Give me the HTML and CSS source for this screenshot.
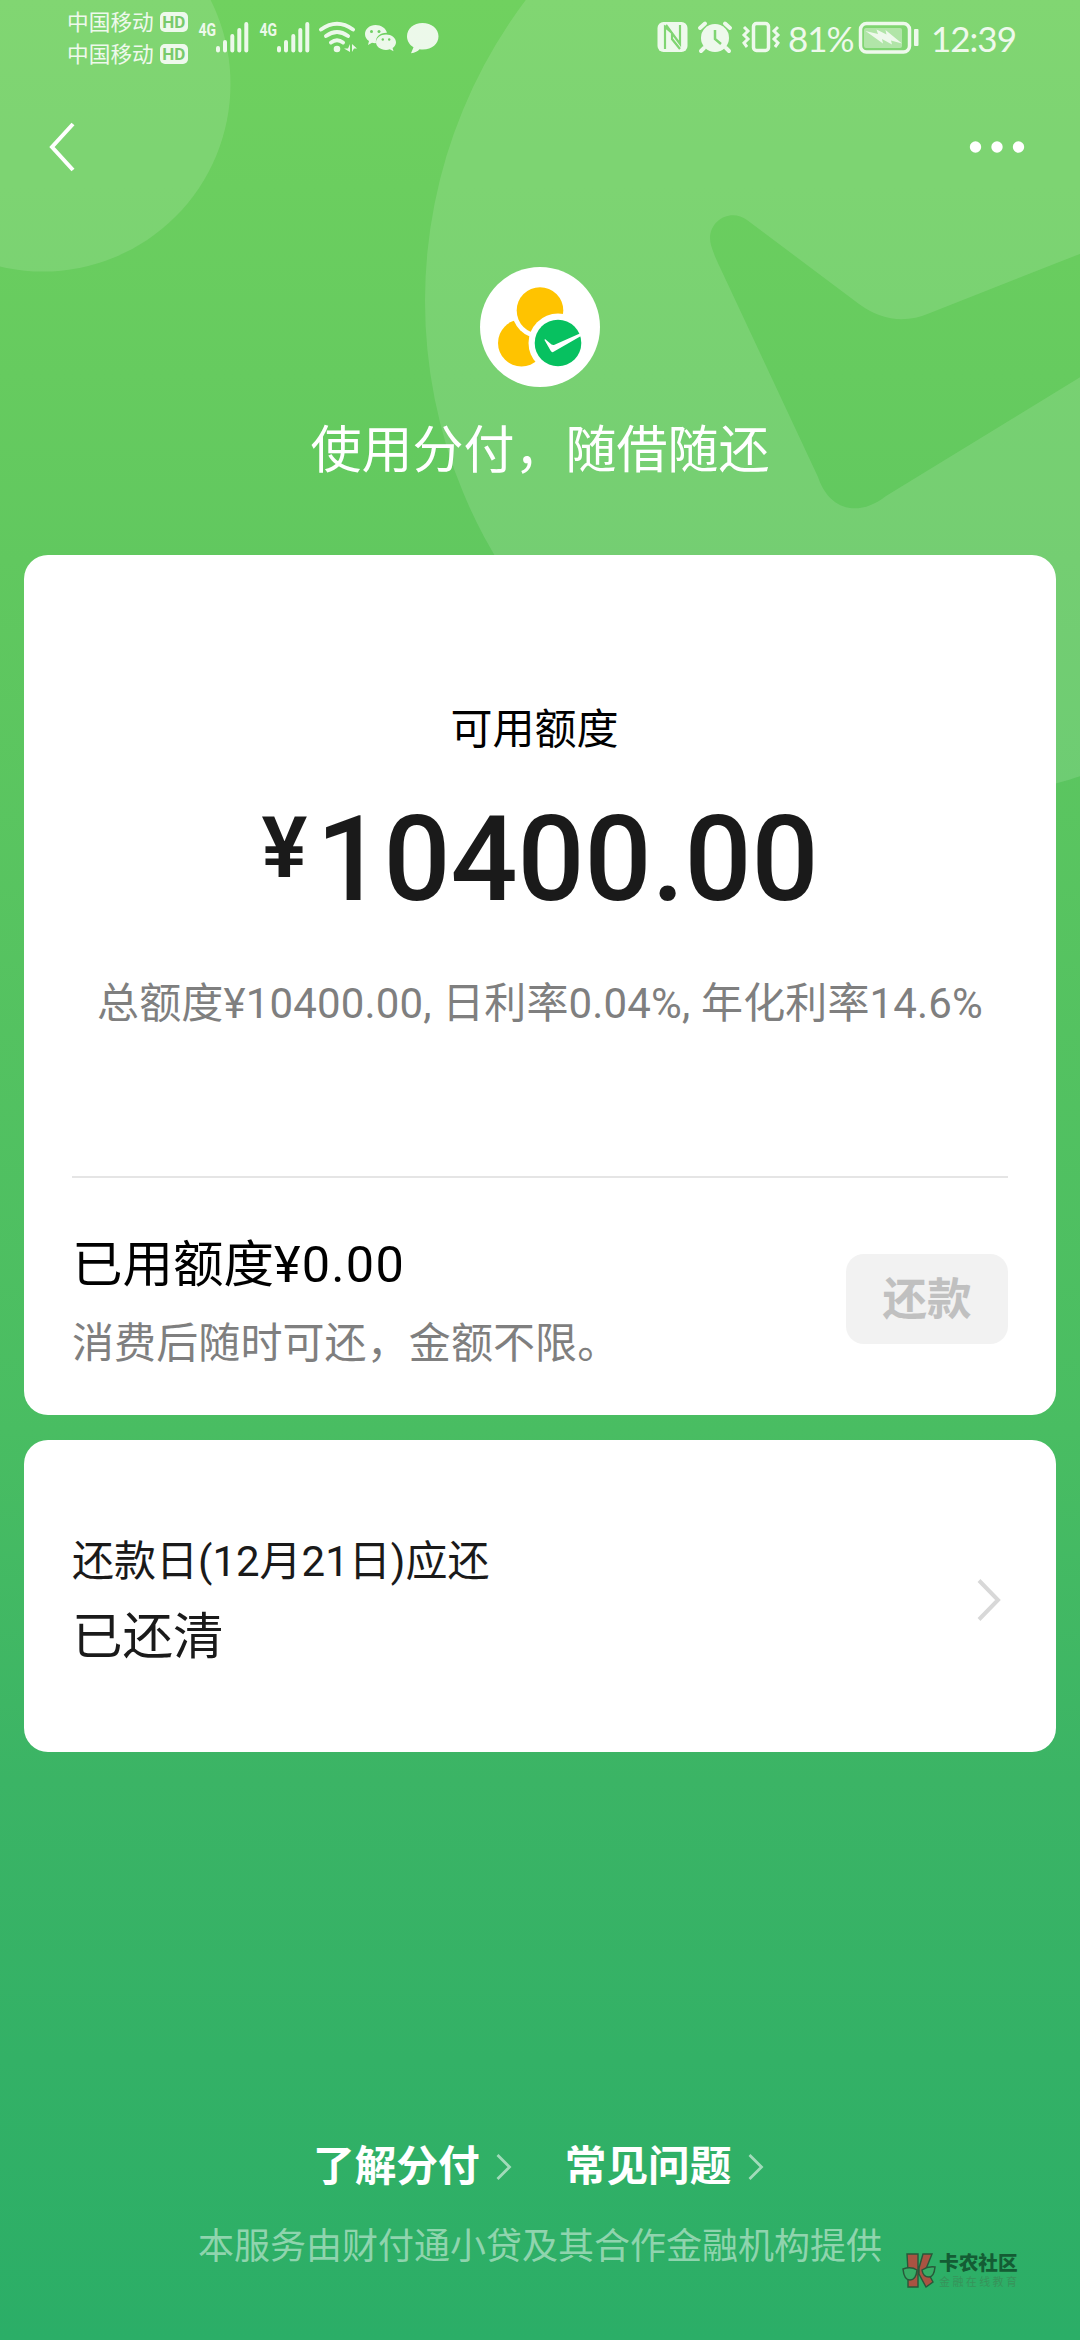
FILE: index.html
```html
<!DOCTYPE html>
<html lang="zh-CN">
<head>
<meta charset="utf-8">
<title>分付</title>
<link rel="stylesheet" href="styles.css">
</head>
<body>
<div class="page">
  <svg class="backdrop" viewBox="0 0 1080 900" width="1080" height="900">
    <circle cx="43" cy="84" r="187.5" fill="#fff" fill-opacity=".12"/>
    <path fill="#fff" fill-opacity=".12" fill-rule="evenodd" d="M425 301a500 500 0 1 0 1000 0a500 500 0 1 0 -1000 0ZM1100 246L930 313Q893 329 859 304L747 220C730 207 705 222 711 245Q713 252 717 261L818 477C829 510 858 518 886 496L1100 365Z"/>
  </svg>

  <header class="status">
    <div class="carriers">
      <div class="carrier">中国移动<span class="hd">HD</span></div>
      <div class="carrier">中国移动<span class="hd">HD</span></div>
    </div>
    <svg class="status-left" viewBox="195 0 250 80" width="250" height="80" fill="#fff">
      <g id="signal">
        <text class="net" x="198.500" y="36" textLength="17.500" lengthAdjust="spacingAndGlyphs">4G</text>
        <path d="M218 48v2.500M225 42v8.500M232.300 36v14.500M239.300 30v20.500M246.300 24v26.500" stroke="#fff" stroke-width="4" stroke-linecap="round"/>
      </g>
      <use href="#signal" x="61"/>
      <g fill="none" stroke="#fff" stroke-width="4" stroke-linecap="round">
        <path d="M321 29.500Q337 18 353 29.500M326 36Q337 28 348 36M331 42.500Q337 38 343 42.500"/>
      </g>
      <circle cx="337" cy="49" r="3.300"/>
      <path d="M350 44v8l-6-3.500h4zM352 52v-8l5 4.500h-3z"/>
      <path d="M375.500 25c-6 0-10.500 4-10.500 9 0 3 1.500 5.500 4 7l-1 4 4-2.300q2 .6 4 .4c-1-6 4-10.500 11-10.300-1-4.600-6-7.800-11.500-7.800z"/>
      <path d="M386 34.500c-5.600 0-10 3.500-10 7.700s4.400 7.700 10 7.700q2 0 3.800-.6l3.700 2-.9-3.300c2-1.400 3.400-3.500 3.400-5.800 0-4.200-4.400-7.700-10-7.700z"/>
      <g fill="#72cf64"><circle cx="371.500" cy="31.500" r="1.500"/><circle cx="379" cy="31.500" r="1.500"/><circle cx="382.800" cy="39.500" r="1.200"/><circle cx="389.200" cy="39.500" r="1.200"/></g>
      <path d="M422.500 23c-9 0-15.500 5.800-15.500 13.300 0 4.700 2.500 8.500 6.500 11l-2.500 6q6-1 8.500-4c11 1.500 19-4.500 19-13 0-7.500-7-13.300-16-13.300z"/>
    </svg>
    <div class="status-right">
      <svg viewBox="655 0 130 80" width="130" height="80" fill="#fff">
        <rect x="657.500" y="22" width="30" height="30" rx="6"/>
        <path d="M665 49V27l7 6v6l8 10M666 25l14 19V25" fill="none" stroke="#80d572" stroke-width="2.200"/>
        <circle cx="715" cy="38" r="14"/>
        <path d="M700 28l5-4.500M730 28l-5-4.500M704 48l-3 3M726 48l3 3" stroke="#fff" stroke-width="4" stroke-linecap="round"/>
        <path d="M715 30v9l6 5" fill="none" stroke="#80d572" stroke-width="2.500"/>
        <rect x="753.500" y="23.500" width="15" height="27" rx="3" fill="none" stroke="#fff" stroke-width="3.500"/>
        <path d="M744 27l4 4-4 4 4 4-4 4 3 4M778 27l-4 4 4 4-4 4 4 4-3 4" fill="none" stroke="#fff" stroke-width="3"/>
      </svg>
      <span class="battery-text">81%</span>
      <svg class="battery" viewBox="858 0 62 80" width="62" height="80" fill="#fff">
        <rect x="860.500" y="23.500" width="49" height="28.500" rx="6" fill="none" stroke="#fff" stroke-width="3.500"/>
        <rect x="864" y="28" width="38" height="20" rx="2" fill-opacity=".45"/>
        <rect x="914" y="29" width="4.500" height="17" rx="1"/>
        <path d="M865.500 31l12.500 3-1.500-4.500 10 5-1-4.500 16.500 13.500-11-3 1 4-10-5.500 1 4.500z"/>
      </svg>
      <span class="clock">12:39</span>
    </div>
  </header>

  <nav class="nav">
    <svg viewBox="0 0 30 54" width="30" height="54"><path d="M27 4L6 27l21 23" fill="none" stroke="#fff" stroke-width="4"/></svg>
    <svg viewBox="0 0 56 14" width="56" height="14" fill="#fff"><circle cx="6.500" cy="7" r="5.700"/><circle cx="28" cy="7" r="5.700"/><circle cx="49.500" cy="7" r="5.700"/></svg>
  </nav>

  <section class="hero">
    <svg viewBox="0 0 120 120" width="120" height="120">
      <circle cx="60" cy="60" r="60" fill="#fff"/>
      <circle cx="41.500" cy="76" r="23.500" fill="#ffc300"/>
      <circle cx="60" cy="43.500" r="28" fill="#fff"/>
      <circle cx="60" cy="43.500" r="23.300" fill="#ffc300"/>
      <circle cx="78" cy="76" r="29.500" fill="#fff"/>
      <circle cx="78" cy="76" r="23.300" fill="#07c160"/>
      <path d="M65 72l6.500 5.500q1.500.8 3 .2L101 66v3L74 84.500q-2 1.500-3.200-.5L64.500 73z" fill="#fff"/>
    </svg>
    <h1>使用分付，随借随还</h1>
  </section>

  <main>
    <section class="card quota">
      <div class="label">可用额度</div>
      <div class="amount"><span class="yen">¥</span><span>10400.00</span></div>
      <div class="terms">总额度¥10400.00, 日利率0.04%, 年化利率14.6%</div>
      <div class="used">
        <div>
          <div class="strong">已用额度<span class="figure">¥0.00</span></div>
          <div class="hint">消费后随时可还，金额不限。</div>
        </div>
        <button class="repay">还款</button>
      </div>
    </section>
    <section class="card due">
      <div>
        <div class="due-date">还款日(12月21日)应还</div>
        <div class="strong">已还清</div>
      </div>
      <svg viewBox="0 0 26 44" width="26" height="44"><path d="M3 2.500L22 22 3 41.500" fill="none" stroke="#d8d8d8" stroke-width="4"/></svg>
    </section>
  </main>

  <footer>
    <div class="links">
      <a>了解分付<svg viewBox="0 0 16 28" width="16" height="28"><path d="M1.500 2L13.500 14 1.500 26" fill="none" stroke="#fff" stroke-opacity=".55" stroke-width="2.800"/></svg></a>
      <a>常见问题<svg viewBox="0 0 16 28" width="16" height="28"><path d="M1.500 2L13.500 14 1.500 26" fill="none" stroke="#fff" stroke-opacity=".55" stroke-width="2.800"/></svg></a>
    </div>
    <p>本服务由财付通小贷及其合作金融机构提供</p>
  </footer>

  <div class="stamp">
    <svg viewBox="0 0 36 36" width="36" height="36">
      <g fill="#a95342" stroke="#28583a" stroke-width="1.400">
        <path d="M6 1h11v33H7V18zM18 15l4-14h9l-6 15 7 13-7 5-7-13z"/>
      </g>
      <path d="M2 16q8-3 14 1-1 10-7 10-6 0-7-11zM21 17q6-4 13-3-1 10-6 10-6 0-7-7z" fill="#37ad66" stroke="#28583a" stroke-width="1.500"/>
    </svg>
    <div>
      <div class="stamp-name">卡农社区</div>
      <div class="stamp-sub">金融在线教育</div>
    </div>
  </div>
</div>
</body>
</html>
```
FILE: styles.css
```css
* { box-sizing: border-box; }
body {
  margin: 0;
  font-family: "Roboto", "Noto Sans CJK SC", sans-serif;
}
svg { display: block; flex: none; }
.page {
  position: relative;
  width: 1080px;
  height: 2340px;
  overflow: hidden;
  display: flex;
  flex-direction: column;
  background: linear-gradient(#70d15f 0, #61c85f 560px, #49bd62 1430px, #3bb465 1780px, #2bae67 2340px);
}
.backdrop { position: absolute; left: 0; top: 0; }
.status, .nav, .hero, main, footer { position: relative; }

.status {
  height: 80px;
  padding-left: 67px;
  display: flex;
  color: #fff;
  opacity: .87;
}
.carriers { width: 128px; padding-top: 6px; }
.carrier {
  display: flex;
  align-items: center;
  gap: 6px;
  height: 32px;
  line-height: 33px;
  font-size: 21.700px;
  white-space: nowrap;
}
.hd {
  width: 28px;
  height: 20px;
  border-radius: 5px;
  background: #fff;
  color: #77c96a;
  font: bold 17px/20px "Roboto", sans-serif;
  text-align: center;
}
.net { font: bold 19px "Roboto", sans-serif; }
.status-right {
  margin-left: 210px;
  display: flex;
  font: 35px/76px "Lato", sans-serif;
}
.battery-text { width: 73px; padding-left: 3px; letter-spacing: -1px; }
.clock { padding-left: 11px; letter-spacing: -1px; }

.nav {
  height: 134px;
  padding: 0 55px 0 46px;
  display: flex;
  justify-content: space-between;
  align-items: center;
}
.hero {
  padding-top: 53px;
  height: 341px;
  display: flex;
  flex-direction: column;
  align-items: center;
}
.hero h1 {
  margin: 29px 0 0;
  font-size: 51px;
  font-weight: 400;
  line-height: 70px;
  color: #fff;
}
main {
  padding: 0 24px;
  display: flex;
  flex-direction: column;
  gap: 25px;
}
.card { background: #fff; border-radius: 24px; }
.quota {
  height: 860px;
  padding: 145px 48px 0;
  text-align: center;
}
.label {
  padding-right: 11px;
  font-size: 42px;
  line-height: 60px;
  color: #000;
}
.amount {
  height: 160px;
  display: flex;
  justify-content: center;
  align-items: baseline;
  gap: 9px;
  margin-top: 18px;
  font-size: 118px;
  font-weight: 500;
  line-height: 164px;
  color: #1a1a1a;
}
.yen { font-size: 86px; font-weight: 600; position: relative; top: -23px; }
.terms {
  margin: 36px -10px 0;
  font-size: 42px;
  line-height: 60px;
  letter-spacing: .15px;
  color: #7f7f7f;
  white-space: nowrap;
}
.used {
  margin-top: 142px;
  padding: 49px 0 0;
  border-top: 2px solid #e5e5e5;
  display: flex;
  justify-content: space-between;
  text-align: left;
}
.strong { font-size: 50.500px; line-height: 76px; color: #000; }
.figure { letter-spacing: 1.200px; }
.hint { font-size: 42px; line-height: 60px; margin-top: 11px; letter-spacing: .1px; color: #7f7f7f; }
.repay {
  width: 162px;
  height: 90px;
  margin: 27px 0 0;
  padding: 0;
  border: 0;
  border-radius: 18px;
  background: #f2f2f2;
  color: #c0c0c0;
  font: 600 44.500px/92px "Roboto", "Noto Sans CJK SC", sans-serif;
}
.due {
  height: 312px;
  padding: 7px 54px 0 48px;
  display: flex;
  align-items: center;
  justify-content: space-between;
}
.due-date { font-size: 42px; line-height: 74px; color: #1a1a1a; }
.due .strong { color: #1a1a1a; }
footer { margin-top: 385px; color: #fff; }
.links {
  display: flex;
  gap: 53px;
  padding-left: 313px;
  font-size: 41.700px;
  font-weight: 700;
  line-height: 60px;
}
.links a { display: flex; align-items: center; gap: 16px; }
footer p {
  margin: 25px 0 0;
  text-align: center;
  font-size: 36px;
  line-height: 50px;
  color: rgba(255, 255, 255, .48);
}
.stamp {
  position: absolute;
  left: 901px;
  top: 2253px;
  display: flex;
  gap: 2px;
}
.stamp-name {
  font-size: 19.700px;
  font-weight: 800;
  line-height: 22px;
  color: #145c34;
}
.stamp-sub {
  font-size: 11px;
  line-height: 16px;
  letter-spacing: 2.400px;
  color: #37935a;
  white-space: nowrap;
}
```
